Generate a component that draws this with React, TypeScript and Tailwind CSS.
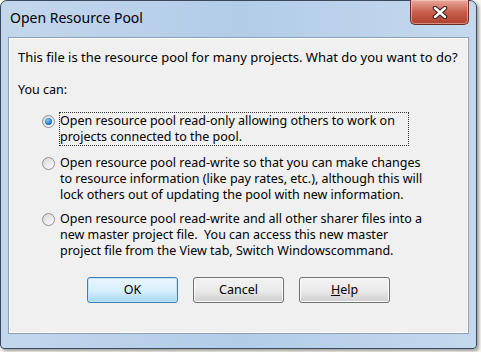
import React from "react";

const font = { fontFamily: '"Noto Sans", "Open Sans", "DejaVu Sans", sans-serif' };

function Radio({ checked }: { checked?: boolean }) {
  return (
    <div className="w-[13px] h-[13px] rounded-full border border-[#8e8f8f] bg-gradient-to-br from-[#d8d8d8] to-[#fcfcfc] flex items-center justify-center shrink-0">
      {checked && (
        <div className="w-[7px] h-[7px] rounded-full bg-[radial-gradient(circle_at_40%_35%,#7fd0ff,#1f76c4_60%,#0c4b8a)]" />
      )}
    </div>
  );
}

function Btn({ children, primary }: { children: React.ReactNode; primary?: boolean }) {
  return (
    <div
      className={
        "w-[91px] h-[26px] rounded-[3px] flex items-center justify-center text-[12.5px] text-black " +
        (primary
          ? "border border-[#3c7fb1] bg-gradient-to-b from-[#eaf6fd] via-[#d9f0fc] to-[#a7d9f5] shadow-[inset_0_0_0_1px_#bde6fd]"
          : "border border-[#707070] bg-gradient-to-b from-[#f2f2f2] via-[#ebebeb] to-[#cfcfcf] shadow-[inset_0_0_0_1px_#fcfcfc]")
      }
    >
      {children}
    </div>
  );
}

export default function App() {
  return (
    <div className="w-[481px] h-[352px] bg-[#f7f5f0] overflow-hidden" style={font}>
      <div className="w-[477px] h-[349px] rounded-t-[7px] rounded-b-[4px] border border-[#3a4a5c] bg-gradient-to-r from-[#c3d7ec] via-[#b2cce8] to-[#c5d9ee] shadow-[2px_2px_3px_rgba(0,0,0,0.35)] flex flex-col">
        <div className="h-[36px] shrink-0 flex items-start justify-between pl-[9px] pr-[7px]">
          <div className="mt-[8px] text-[14px] text-black leading-[18px]">Open Resource Pool</div>
          <div className="w-[59px] h-[25px] -mt-px rounded-b-[5px] border border-[#6b2a22] border-t-0 bg-gradient-to-b from-[#e9a99c] via-[#c75f4c] to-[#b1402b] flex items-center justify-center shadow-[inset_0_0_0_1px_rgba(255,220,210,0.5)]">
            <svg width="16" height="13" viewBox="0 0 16 13">
              <path d="M3 2 L13 11 M13 2 L3 11" stroke="#3b1e1a" strokeWidth="4.5" strokeLinecap="round" />
              <path d="M3 2 L13 11 M13 2 L3 11" stroke="#ffffff" strokeWidth="2.5" strokeLinecap="round" />
            </svg>
          </div>
        </div>
        <div className="mx-[7px] h-[297px] border border-[#8aa0b8] bg-[#f0f0f0] shadow-[inset_0_0_0_1px_#ffffff] text-[12.5px] leading-[16px] text-black flex flex-col pl-[9px] pt-[11px] whitespace-nowrap">
          <div className="text-[13px]">This file is the resource pool for many projects. What do you want to do?</div>
          <div className="mt-[17px]">You can:</div>
          <div className="mt-[15px] pl-[24px] flex flex-col">
            <div className="flex items-start gap-[5px]">
              <div className="mt-[2px]"><Radio checked /></div>
              <div className="border border-dotted border-[#333] w-[350px] -mt-px -ml-px">
                Open resource pool read-only allowing others to work on<br />projects connected to the pool.
              </div>
            </div>
            <div className="flex items-start gap-[5px] mt-[9px]">
              <div className="mt-[2px]"><Radio /></div>
              <div>
                Open resource pool read-write so that you can make changes<br />to resource information (like pay rates, etc.), although this will<br />lock others out of updating the pool with new information.
              </div>
            </div>
            <div className="flex items-start gap-[5px] mt-[8px]">
              <div className="mt-[2px]"><Radio /></div>
              <div>
                Open resource pool read-write and all other sharer files into a<br />new master project file.&nbsp; You can access this new master<br />project file from the View tab, Switch Windowscommand.
              </div>
            </div>
          </div>
          <div className="mt-[18px] flex gap-[15px] pl-[69px]">
            <Btn primary>OK</Btn>
            <Btn>Cancel</Btn>
            <Btn><span><span className="underline">H</span>elp</span></Btn>
          </div>
        </div>
      </div>
    </div>
  );
}
